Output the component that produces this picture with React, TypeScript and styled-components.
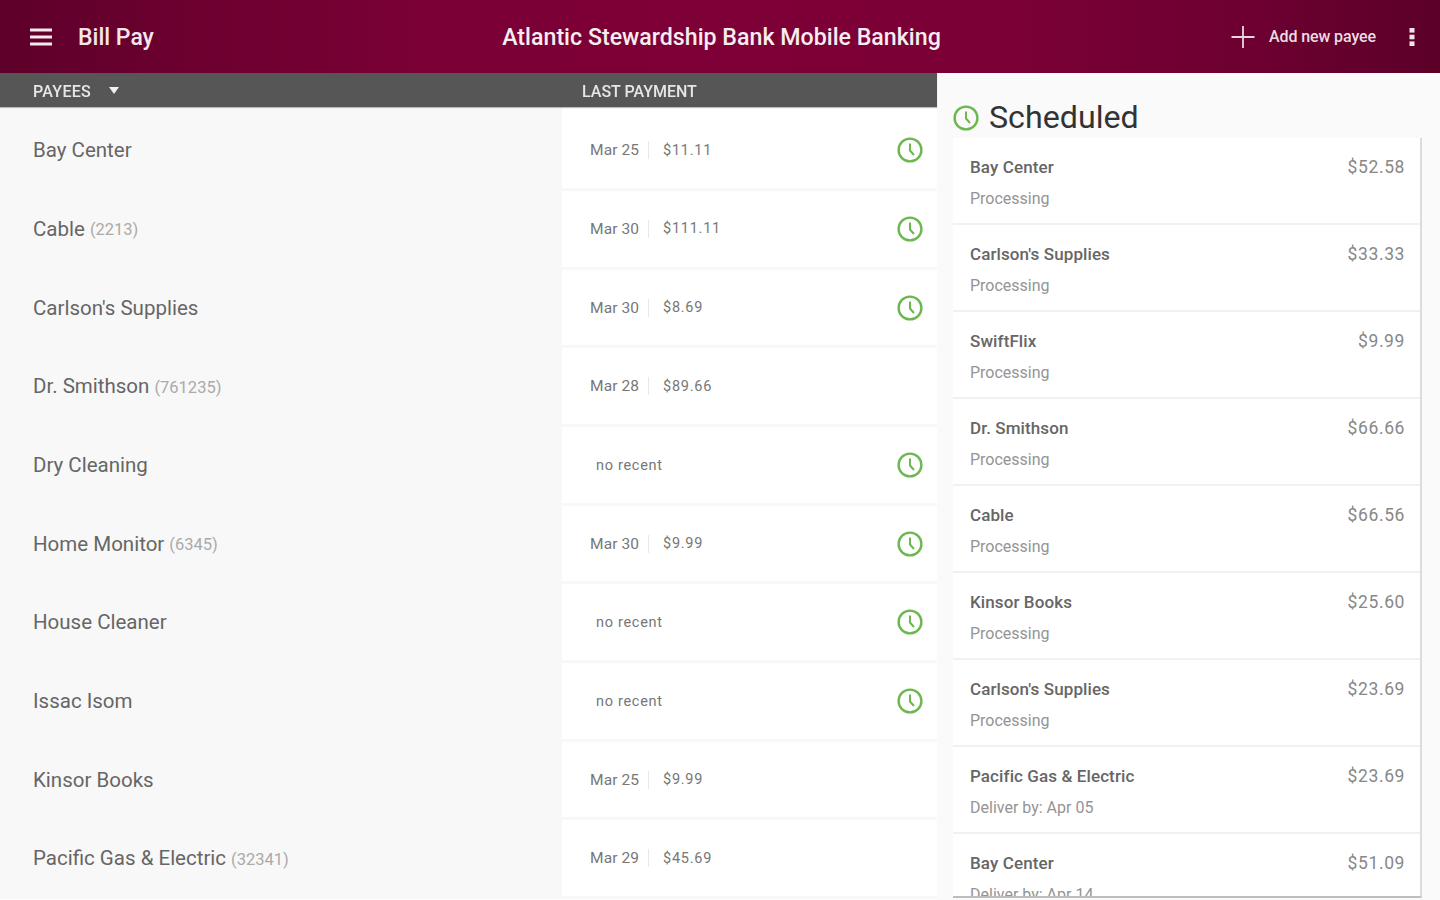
import React from "react";
import styled, { createGlobalStyle } from "styled-components";

const Global = createGlobalStyle`
  html, body { margin: 0; padding: 0; height: 100%; background: #fafafa; }
  body { font-family: Roboto, "Liberation Sans", sans-serif; overflow: hidden; }
`;

const Page = styled.div`
  width: 1440px;
  height: 900px;
  display: flex;
  flex-direction: column;
  overflow: hidden;
  filter: blur(0.6px);
`;

const Header = styled.header`
  height: 73px;
  flex: none;
  display: grid;
  grid-template-columns: 1fr auto 1fr;
  align-items: center;
  padding: 0 25px 0 30px;
  box-sizing: border-box;
  color: #fff;
  background: linear-gradient(90deg, #5e0029 0%, #6b002f 12%, #7b0035 30%, #7d0036 50%, #7b0035 70%, #6c0030 88%, #5c0028 100%);
`;

const HeaderSide = styled.div<{ $end?: boolean }>`
  display: flex;
  align-items: center;
  justify-content: ${(p) => (p.$end ? "flex-end" : "flex-start")};
`;

const PageTitle = styled.span`
  font-size: 23px;
  font-weight: 500;
  color: #f3e6ea;
  margin-left: 26px;
  padding-top: 2px;
`;

const BankName = styled.span`
  font-size: 23.2px;
  font-weight: 500;
  color: #f6edf0;
  white-space: nowrap;
  margin-right: 2px;
`;

const AddLabel = styled.span`
  font-size: 16px;
  font-weight: 500;
  color: #eadde2;
  margin-left: 14px;
  margin-right: 33px;
  letter-spacing: -0.1px;
`;

const Body = styled.div`
  flex: 1;
  display: flex;
  min-height: 0;
`;

const LeftPane = styled.section`
  width: 937px;
  flex: none;
  display: flex;
  flex-direction: column;
  background: #fff;
`;

const ColumnBar = styled.div`
  height: 34px;
  flex: none;
  box-sizing: border-box;
  padding-top: 3px;
  display: grid;
  grid-template-columns: 562px 1fr;
  align-items: center;
  background: #565656;
  color: #e6e6e6;
  font-size: 16px;
  font-weight: 500;
  box-shadow: 0 1px 1px rgba(0, 0, 0, 0.25);
  position: relative;
`;

const PayeesHead = styled.div`
  display: flex;
  align-items: center;
  padding-left: 33px;
  letter-spacing: 0.3px;
`;

const Caret = styled.span`
  width: 0;
  height: 0;
  margin-left: 18px;
  margin-top: -2px;
  border-left: 5px solid transparent;
  border-right: 5px solid transparent;
  border-top: 7px solid #f0f0f0;
`;

const LastHead = styled.div`
  padding-left: 20px;
`;

const Rows = styled.div`
  padding-top: 5.5px;
  display: flex;
  flex-direction: column;
  background: linear-gradient(90deg, #f8f8f8 562px, #fff 562px);
`;

const Row = styled.div`
  height: 78.67px;
  flex: none;
  display: grid;
  grid-template-columns: 562px 1fr;
  box-sizing: border-box;
  border-bottom: 3px solid #f8f8f8;
`;

const NameCell = styled.div`
  background: #f8f8f8;
  display: flex;
  align-items: center;
  padding: 0 0 0 33px;
  font-size: 20.5px;
  color: #666;
  white-space: pre;
`;

const Account = styled.span`
  font-size: 16.5px;
  color: #aaa;
  margin-left: 5px;
  padding-top: 2px;
`;

const PayCell = styled.div`
  background: #fff;
  display: flex;
  align-items: center;
  padding: 0 14px 0 28px;
  font-size: 14.5px;
  color: #777;
`;

const PayDate = styled.span`
  width: 59px;
  box-sizing: border-box;
  border-right: 1px solid #e8e8e8;
  font-size: 15.5px;
  letter-spacing: 0.1px;
`;

const PayAmount = styled.span`
  margin-left: 14px;
  letter-spacing: 0.75px;
`;

const NoRecent = styled.span`
  margin-left: 6px;
  margin-top: 1px;
  letter-spacing: 0.7px;
`;

const ClockSlot = styled.span`
  margin-left: auto;
  display: flex;
`;

const RightPane = styled.aside`
  flex: 1;
  min-width: 0;
  display: flex;
  flex-direction: column;
  padding: 0 18px 2px 16px;
  background: #fafafa;
`;

const ScheduledHead = styled.div`
  height: 65px;
  flex: none;
  box-sizing: border-box;
  display: flex;
  align-items: flex-end;
  padding-bottom: 2px;
`;

const ScheduledTitle = styled.h2`
  margin: 0 0 0 10px;
  font-size: 32.2px;
  font-weight: 400;
  line-height: 38px;
  color: #333;
`;

const HeadIcon = styled.span`
  display: flex;
  margin-bottom: 5px;
`;

const CardList = styled.div`
  flex: 1;
  min-height: 0;
  overflow: hidden;
  background: #fff;
  border-right: 2px solid #dcdcdc;
  border-bottom: 2px solid #bdbdbd;
  display: flex;
  flex-direction: column;
`;

const Card = styled.div`
  height: 87px;
  flex: none;
  box-sizing: border-box;
  padding: 17px 15px 0 17px;
  border-bottom: 2px solid #f1f1f1;
`;

const CardTop = styled.div`
  display: flex;
  justify-content: space-between;
  font-size: 17px;
  line-height: 24px;
  font-weight: 500;
  letter-spacing: 0.1px;
  color: #666;
`;

const CardAmount = styled.span`
  color: #888;
  font-weight: 400;
  font-size: 17.5px;
  letter-spacing: 0.6px;
`;

const CardStatus = styled.div`
  font-size: 16px;
  line-height: 24px;
  margin-top: 8px;
  color: #949494;
`;

const Clock = ({ size }: { size: number }) => (
  <svg width={size} height={size} viewBox="0 0 26 26" fill="none" stroke="#6cb74f" strokeWidth="2.4">
    <circle cx="13" cy="13" r="11.4" />
    <path d="M13 6.5V13.5L17 18" strokeWidth="2" />
  </svg>
);

const Menu = () => (
  <svg width="22" height="18" viewBox="0 0 22 18" fill="#f4e9ec">
    <rect y="0.5" width="22" height="3" />
    <rect y="7.5" width="22" height="3" />
    <rect y="14.5" width="22" height="3" />
  </svg>
);

const Plus = () => (
  <svg width="24" height="24" viewBox="0 0 24 24" stroke="#e9d6dc" strokeWidth="1.8">
    <path d="M0.5 12H23.5M12 1V23" />
  </svg>
);

const Kebab = () => (
  <svg width="6" height="18" viewBox="0 0 6 18" fill="#f2e6ea">
    <rect x="0.5" y="0" width="5" height="4.6" />
    <rect x="0.5" y="6.7" width="5" height="4.6" />
    <rect x="0.5" y="13.4" width="5" height="4.6" />
  </svg>
);

type Payee = { name: string; acct?: string; date?: string; amount?: string; clock: boolean };

const payees: Payee[] = [
  { name: "Bay Center", date: "Mar 25", amount: "$11.11", clock: true },
  { name: "Cable", acct: "(2213)", date: "Mar 30", amount: "$111.11", clock: true },
  { name: "Carlson's Supplies", date: "Mar 30", amount: "$8.69", clock: true },
  { name: "Dr. Smithson", acct: "(761235)", date: "Mar 28", amount: "$89.66", clock: false },
  { name: "Dry Cleaning", clock: true },
  { name: "Home Monitor", acct: "(6345)", date: "Mar 30", amount: "$9.99", clock: true },
  { name: "House Cleaner", clock: true },
  { name: "Issac Isom", clock: true },
  { name: "Kinsor Books", date: "Mar 25", amount: "$9.99", clock: false },
  { name: "Pacific Gas & Electric", acct: "(32341)", date: "Mar 29", amount: "$45.69", clock: false },
];

const scheduled = [
  ["Bay Center", "$52.58", "Processing"],
  ["Carlson's Supplies", "$33.33", "Processing"],
  ["SwiftFlix", "$9.99", "Processing"],
  ["Dr. Smithson", "$66.66", "Processing"],
  ["Cable", "$66.56", "Processing"],
  ["Kinsor Books", "$25.60", "Processing"],
  ["Carlson's Supplies", "$23.69", "Processing"],
  ["Pacific Gas & Electric", "$23.69", "Deliver by: Apr 05"],
  ["Bay Center", "$51.09", "Deliver by: Apr 14"],
];

export default function App() {
  return (
    <Page>
      <Global />
      <Header>
        <HeaderSide>
          <Menu />
          <PageTitle>Bill Pay</PageTitle>
        </HeaderSide>
        <BankName>Atlantic Stewardship Bank Mobile Banking</BankName>
        <HeaderSide $end>
          <Plus />
          <AddLabel>Add new payee</AddLabel>
          <Kebab />
        </HeaderSide>
      </Header>
      <Body>
        <LeftPane>
          <ColumnBar>
            <PayeesHead>
              PAYEES
              <Caret />
            </PayeesHead>
            <LastHead>LAST PAYMENT</LastHead>
          </ColumnBar>
          <Rows>
            {payees.map((p) => (
              <Row key={p.name}>
                <NameCell>
                  {p.name}
                  {p.acct && <Account>{p.acct}</Account>}
                </NameCell>
                <PayCell>
                  {p.date ? (
                    <>
                      <PayDate>{p.date}</PayDate>
                      <PayAmount>{p.amount}</PayAmount>
                    </>
                  ) : (
                    <NoRecent>no recent</NoRecent>
                  )}
                  {p.clock && (
                    <ClockSlot>
                      <Clock size={26} />
                    </ClockSlot>
                  )}
                </PayCell>
              </Row>
            ))}
          </Rows>
        </LeftPane>
        <RightPane>
          <ScheduledHead>
            <HeadIcon>
              <Clock size={26} />
            </HeadIcon>
            <ScheduledTitle>Scheduled</ScheduledTitle>
          </ScheduledHead>
          <CardList>
            {scheduled.map(([name, amount, status], i) => (
              <Card key={i}>
                <CardTop>
                  <span>{name}</span>
                  <CardAmount>{amount}</CardAmount>
                </CardTop>
                <CardStatus>{status}</CardStatus>
              </Card>
            ))}
          </CardList>
        </RightPane>
      </Body>
    </Page>
  );
}
